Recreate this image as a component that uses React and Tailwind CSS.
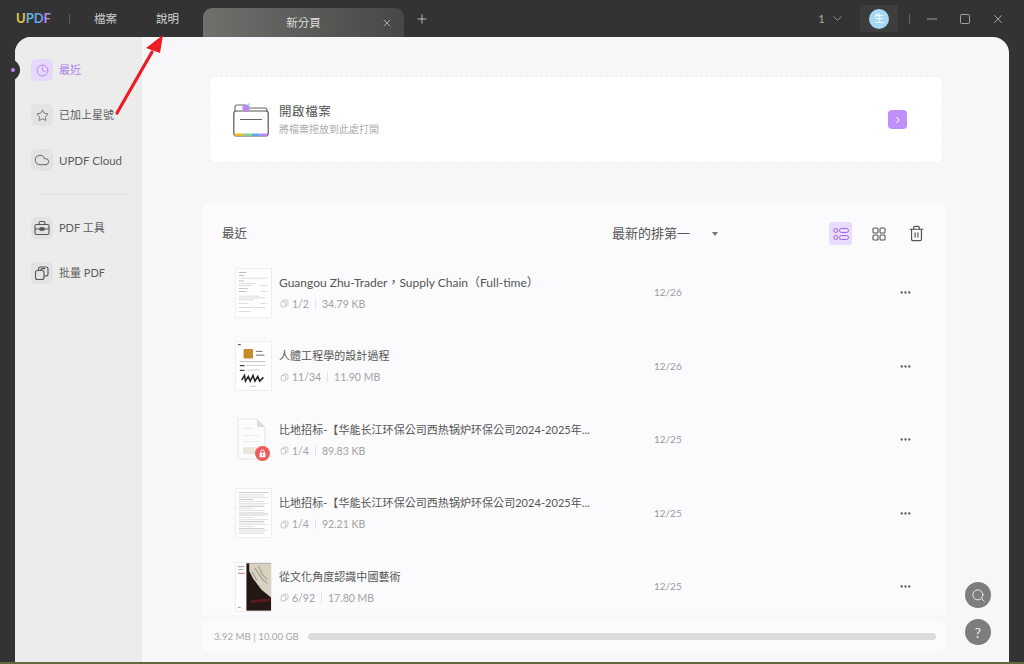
import React from "react";
import { X, Plus, ChevronDown, Minus, Square, Clock, Star, Cloud, ChevronRight, Trash2, Ellipsis, Search } from "lucide-react";

function PagesIcon({ className }) {
  return (
    <svg viewBox="0 0 12 12" className={className} fill="none" stroke="currentColor" strokeWidth="1">
      <rect x="1.5" y="3.5" width="6" height="7" rx="1" />
      <path d="M4 3.5V2.5a1 1 0 0 1 1-1h4.5a1 1 0 0 1 1 1v5a1 1 0 0 1-1 1h-2" />
    </svg>
  );
}

function TextLines({ rows }) {
  return (
    <>
      {rows.map((r, i) => (
        <rect key={i} x={r[0]} y={r[1]} width={r[2]} height="0.5" fill={r[3] || "#b5b5b5"} />
      ))}
    </>
  );
}

const resume = [
  [3, 3, 8, "#777"], [3, 6, 6, "#888"], [3, 9, 30], [3, 12, 5, "#777"], [3, 15, 18], [3, 17, 14], [26, 17, 7], [3, 20, 10, "#888"], [3, 23, 8, "#777"],
  [26, 23, 7], [3, 28, 22], [3, 30, 28], [3, 32, 16], [3, 36, 10], [26, 36, 7], [3, 40, 28], [3, 44, 12],
];
const dense = Array.from({ length: 24 }, (_, i) => [3, 3 + i * 1.9, i % 5 === 4 ? 16 : i % 3 === 0 ? 31 : 27, i % 4 === 0 ? "#999" : "#c4c4c4"]);

function Thumb({ kind }) {
  if (kind === "lock") {
    return (
      <div className="relative w-[33px] h-[43px] flex justify-start">
        <svg viewBox="0 0 29 42" className="w-[29px] h-[42px]">
          <path d="M1 1h19l8 8v32H1z" fill="#fcfcfd" stroke="#e6e6e8" />
          <path d="M20 1v8h8z" fill="#dcdcdf" />
          <rect x="6" y="10" width="10" height="1" fill="#ececee" />
          <rect x="6" y="17" width="17" height="1" fill="#ececee" />
          <rect x="6" y="23" width="17" height="1" fill="#ececee" />
          <rect x="6" y="29" width="14" height="7" rx="1" fill="#ebe7dc" />
        </svg>
        <div className="absolute right-0 bottom-0 w-[15px] h-[15px] rounded-full bg-[#f25a5a] flex items-center justify-center">
          <svg viewBox="0 0 10 10" className="w-[9px] h-[9px]">
            <path d="M3 4.5V3a2 2 0 0 1 4 0v1.5" fill="none" stroke="#fff" strokeWidth="1.1" />
            <rect x="1.8" y="4.3" width="6.4" height="5" rx="0.8" fill="#fff" />
            <rect x="4.5" y="5.7" width="1" height="2" fill="#f25a5a" />
          </svg>
        </div>
      </div>
    );
  }
  if (kind === "art") {
    return (
      <svg viewBox="0 0 37 50" className="w-[37px] h-[50px] border border-[#eeeeee] bg-white">
        <rect x="11" y="0" width="26" height="50" fill="#241815" />
        <path d="M14 0h23v36L27 28 18 16 14 8z" fill="#d9d2c0" />
        <path d="M20 5l8 12 5 4M24 3l4 9 5 5M17 9l5 9" stroke="#a89f8c" strokeWidth="1.3" fill="none" />
        <path d="M16 39l20-2v3l-20 2z" fill="#5b1c1c" />
        <rect x="2" y="3" width="7" height="1" fill="#999" />
        <rect x="2" y="6" width="6" height="1" fill="#bbb" />
        <rect x="2" y="10" width="7" height="1" fill="#d66" />
        <rect x="2" y="46" width="3" height="1" fill="#999" />
      </svg>
    );
  }
  if (kind === "poster") {
    return (
      <svg viewBox="0 0 37 50" className="w-[37px] h-[50px] border border-[#eeeeee] bg-white">
        <rect x="2" y="2" width="3" height="1" fill="#333" />
        <rect x="8" y="7" width="10" height="10" rx="1" fill="#c58a2e" />
        <rect x="21" y="9" width="7" height="1" fill="#666" />
        <rect x="21" y="13" width="9" height="1" fill="#666" />
        <rect x="4" y="20" width="27" height="0.6" fill="#999" />
        <rect x="4" y="24" width="5" height="1.2" fill="#333" />
        <rect x="11" y="24" width="20" height="0.6" fill="#aaa" />
        <rect x="4" y="29" width="5" height="1.2" fill="#333" />
        <rect x="11" y="29" width="14" height="0.6" fill="#aaa" />
        <path d="M6 40l3-5 1 6 3-5 2 5 3-6 2 6 3-5 2 5 4-4" stroke="#222" strokeWidth="1.6" fill="none" />
        <rect x="15" y="46" width="6" height="0.6" fill="#999" />
      </svg>
    );
  }
  return (
    <svg viewBox="0 0 37 50" className="w-[37px] h-[50px] border border-[#eeeeee] bg-white">
      <TextLines rows={kind === "dense" ? dense : resume} />
    </svg>
  );
}

const files = [
  { kind: "resume", latin: true, title: "Guangou Zhu-Trader，Supply Chain（Full-time）", pages: "1/2", size: "34.79 KB", date: "12/26" },
  { kind: "poster", title: "人體工程學的設計過程", pages: "11/34", size: "11.90 MB", date: "12/26" },
  { kind: "lock", title: "比地招标-【华能长江环保公司西热锅炉环保公司2024-2025年...", pages: "1/4", size: "89.83 KB", date: "12/25" },
  { kind: "dense", title: "比地招标-【华能长江环保公司西热锅炉环保公司2024-2025年...", pages: "1/4", size: "92.21 KB", date: "12/25" },
  { kind: "art", title: "從文化角度認識中國藝術", pages: "6/92", size: "17.80 MB", date: "12/25" },
];

function BatchIcon() {
  return (
    <svg viewBox="0 0 16 16" className="w-[16px] h-[16px]" fill="none" stroke="#555" strokeWidth="1.1">
      <rect x="1.5" y="5.5" width="8.5" height="9" rx="2" />
      <path d="M4.5 5.5V4a2 2 0 0 1 2-2H12a2 2 0 0 1 2 2v5a2 2 0 0 1-2 2h-2" />
      <path d="M7 5.5V4.6a1 1 0 0 1 1-1h3" />
    </svg>
  );
}

function ToolboxIcon() {
  return (
    <svg viewBox="0 0 16 16" className="w-[16px] h-[16px]" fill="none" stroke="#555" strokeWidth="1.1">
      <rect x="1" y="4.5" width="14" height="10" rx="1.5" />
      <path d="M5 4.5V3a1.5 1.5 0 0 1 1.5-1.5h3A1.5 1.5 0 0 1 11 3v1.5" />
      <path d="M1 9h5M10 9h5" />
      <rect x="6" y="7.8" width="4" height="2.4" rx="0.5" fill="#555" />
    </svg>
  );
}

function NavItem({ icon, label, active, latin }) {
  return (
    <div className="h-[22px] flex items-center gap-[6px]">
      <div className={`w-[22px] h-[22px] rounded-[5px] flex items-center justify-center ${active ? "bg-[#e6d8fb] text-[#a874ee]" : "bg-[#e3e3e3] text-[#555555]"}`}>
        {icon}
      </div>
      <span className={`pt-[1px] whitespace-nowrap ${latin ? "text-[11.5px]" : "text-[11px]"} ${active ? "text-[#ad7ff0]" : "text-[#5c5c5c]"}`}>{label}</span>
    </div>
  );
}

function FileRow({ f }) {
  return (
    <div className="h-[73.5px] shrink-0 flex items-center pl-8">
      <div className="w-[37px] flex justify-center shrink-0">
        <Thumb kind={f.kind} />
      </div>
      <div className="w-[382px] pl-[7px] shrink-0">
        <div className={`leading-[16px] text-[#555555] whitespace-nowrap ${f.latin ? "text-[12px]" : "text-[11px] tracking-[0.05px]"}`}>{f.title}</div>
        <div className="mt-[6px] flex items-center text-[10.5px] leading-[14px] text-[#a3a3a5]">
          <PagesIcon className="ml-[1px] w-[9px] h-[9px] mr-[3px] text-[#b5b5b7]" />
          <span>{f.pages}</span>
          <span className="w-px h-[10px] bg-[#e4e4e6] mx-[6px]" />
          <span>{f.size}</span>
        </div>
      </div>
      <div className="w-[245px] shrink-0 text-[10px] text-[#9a9a9c]">{f.date}</div>
      <Ellipsis className="w-[13px] h-[13px] text-[#555555]" strokeWidth={2.2} />
    </div>
  );
}

export default function App() {
  return (
    <div lang="zh-TW" className="relative w-[1024px] h-[664px] overflow-hidden bg-[#333333] flex flex-col [font-family:'Lato','Noto_Sans_CJK_TC',sans-serif]">
      {/* Title bar */}
      <div className="h-[37px] shrink-0 flex items-center">
        <div className="w-[70px] pl-4 text-[13px] font-bold flex items-center h-[37px]">
          <span className="text-[#e6c33f]">U</span>
          <span className="text-[#62b6d6]">P</span>
          <span className="text-[#6e9fe6]">D</span>
          <span className="text-[#b58af0]">F</span>
        </div>
        <div className="w-px h-[10px] bg-[#5c5c5c] -ml-[1px]" />
        <span className="ml-[24px] w-[62px] text-[11.5px] text-[#c9c9c9]">檔案</span>
        <span className="w-[47px] text-[11.5px] text-[#d6d6d6]">說明</span>
        <div className="self-end h-[29px] w-[201px] rounded-t-[9px] bg-gradient-to-r from-[#70706d] to-[#474745] flex items-center relative">
          <span className="w-full text-center text-[11.5px] text-[#dddddd]">新分頁</span>
          <X className="absolute left-[178px] top-[9px] w-[12px] h-[12px] text-[#c8c8c8]" strokeWidth={1.5} />
        </div>
        <Plus className="ml-[11px] w-[14px] h-[14px] text-[#d8d8d8]" strokeWidth={1.4} />
        <div className="ml-auto flex items-center h-[37px]">
          <span className="text-[12px] text-[#a8a8a8]">1</span>
          <ChevronDown className="ml-[5px] w-[15px] h-[15px] text-[#a8a8a8]" strokeWidth={1.3} />
          <div className="ml-[15px] w-[38px] h-[27px] bg-[#3d3d3d] flex items-center justify-center">
            <div className="w-[20px] h-[20px] rounded-full bg-[#a5d8f3] flex items-center justify-center text-[10px] text-white">生</div>
          </div>
          <div className="ml-[11px] w-px h-[10px] bg-[#666666]" />
          <Minus className="ml-[14px] w-[16px] h-[16px] text-[#bdbdbd]" strokeWidth={1.2} />
          <Square className="ml-[19px] w-[12px] h-[12px] text-[#bdbdbd]" strokeWidth={1.6} />
          <X className="ml-[20px] mr-[19px] w-[14px] h-[14px] text-[#bdbdbd]" strokeWidth={1.4} />
        </div>
      </div>

      {/* Main window */}
      <div className="mx-[15px] h-[625px] shrink-0 rounded-t-[16px] overflow-hidden flex bg-[#f7f6f8]">
        <aside className="w-[127px] shrink-0 bg-[#ececec] pl-4 pt-[22px] flex flex-col">
          <div className="flex flex-col gap-[23px]">
            <NavItem active label="最近" icon={<Clock className="w-[13px] h-[13px]" strokeWidth={1.4} />} />
            <NavItem label="已加上星號" icon={<Star className="w-[13px] h-[13px]" strokeWidth={1.4} />} />
            <NavItem latin label="UPDF Cloud" icon={<Cloud className="w-[16px] h-[16px]" strokeWidth={1.3} />} />
          </div>
          <div className="ml-[5px] mt-[23px] w-[95px] h-px bg-[#e3e3e3]" />
          <div className="mt-[22px] flex flex-col gap-[23px]">
            <NavItem label="PDF 工具" icon={<ToolboxIcon />} />
            <NavItem label="批量 PDF" icon={<BatchIcon />} />
          </div>
        </aside>

        <main className="flex-1 min-w-0 flex flex-col">
          {/* Open file card */}
          <div className="ml-[67px] mt-[39px] w-[734px] h-[87px] shrink-0 rounded-[6px] bg-white border border-dashed border-[#ededef] flex items-center pl-[23px] pr-[35px]">
            <svg viewBox="0 0 36 34" className="w-[36px] h-[34px] shrink-0">
              <path d="M2 12V4a2 2 0 0 1 2-2h8l2 3h18a2 2 0 0 1 2 2v5" fill="none" stroke="#666" strokeWidth="1.1" />
              <rect x="0.8" y="8" width="34.4" height="25" rx="2.5" fill="#fff" stroke="#555" strokeWidth="1.2" />
              <rect x="7" y="16" width="22" height="1" fill="#666" />
              <circle cx="13" cy="5" r="3.6" fill="#b588f2" />
              <circle cx="16" cy="1.5" r="1.3" fill="#a5e6e6" />
              <rect x="1.5" y="30.5" width="9" height="2.5" fill="#e9bc2f" />
              <rect x="10.5" y="30.5" width="8" height="2.5" fill="#7fd38a" />
              <rect x="18.5" y="30.5" width="8" height="2.5" fill="#62a8e8" />
              <rect x="26.5" y="30.5" width="8" height="2.5" fill="#b588f2" />
            </svg>
            <div className="ml-[10px]">
              <div className="text-[12.5px] leading-[18px] text-[#555555] tracking-[0.6px]">開啟檔案</div>
              <div className="mt-[1px] text-[10px] leading-[14px] text-[#adadad]">將檔案拖放到此處打開</div>
            </div>
            <div className="ml-auto w-[19px] h-[19px] rounded-[4px] bg-[#c08ffa] flex items-center justify-center">
              <ChevronRight className="w-[10px] h-[10px] text-[#ead9ff]" strokeWidth={3} />
            </div>
          </div>

          {/* Recent panel */}
          <div className="ml-[61px] mt-[39px] w-[744px] h-[413px] shrink-0 rounded-t-[8px] bg-[#fbfafc] flex flex-col overflow-hidden">
            <div className="shrink-0 pt-[20px] pb-[11px] pl-[19px] pr-[22px] flex items-center h-[54px]">
              <span className="w-[390px] mt-[2px] text-[12.5px] text-[#555555]">最近</span>
              <span className="w-[100px] text-[13px] text-[#555555] whitespace-nowrap">最新的排第一</span>
              <span className="w-0 h-0 border-x-[3.5px] border-x-transparent border-t-[4px] border-t-[#777777]" />
              <div className="ml-[111px] w-[23px] h-[23px] rounded-[3px] bg-[#e9dcff] flex items-center justify-center">
                <svg viewBox="0 0 16 16" className="w-[16px] h-[16px]" fill="none" stroke="#9a66ea" strokeWidth="1">
                  <circle cx="2.8" cy="4.5" r="2" />
                  <circle cx="2.8" cy="11.5" r="2" />
                  <rect x="6.5" y="2.5" width="9" height="4" rx="2" />
                  <rect x="6.5" y="9.5" width="9" height="4" rx="2" />
                </svg>
              </div>
              <svg viewBox="0 0 14 14" className="ml-[20px] w-[14px] h-[14px]" fill="none" stroke="#555" strokeWidth="1.1">
                <rect x="1" y="1" width="5" height="5" rx="1" />
                <rect x="8" y="1" width="5" height="5" rx="1" />
                <rect x="1" y="8" width="5" height="5" rx="1" />
                <rect x="8" y="8" width="5" height="5" rx="1" />
              </svg>
              <Trash2 className="ml-[22px] w-[17px] h-[17px] text-[#555555]" strokeWidth={1.7} />
            </div>
            {files.map((f, i) => (
              <FileRow key={i} f={f} />
            ))}
          </div>

          {/* Storage */}
          <div className="ml-[61px] mt-[5px] w-[744px] h-[32px] shrink-0 rounded-[6px] bg-[#fbfafc] flex items-center pl-[11px] pr-[11px]">
            <span className="w-[94px] text-[9.7px] text-[#a8a8a8] whitespace-nowrap">3.92 MB | 10.00 GB</span>
            <div className="flex-1 h-[7px] rounded-full bg-[#dbdadc]" />
          </div>
        </main>
      </div>
      <div className="h-[2px] bg-[#5f6b3c]" />

      {/* Active marker notch */}
      <div className="absolute left-[9px] top-[59px] w-[11px] h-[22px] rounded-r-full bg-[#333333] flex items-center pl-[2px]">
        <div className="w-[4px] h-[4px] rounded-full bg-[#b58af0]" />
      </div>

      {/* Floating buttons */}
      <div className="absolute left-[965px] top-[582px] w-[26px] h-[26px] rounded-full bg-[#7d7d7d] flex items-center justify-center">
        <Search className="w-[15px] h-[15px] text-[#eeeeee]" strokeWidth={1.5} />
      </div>
      <div className="absolute left-[965px] top-[619px] w-[26px] h-[26px] rounded-full bg-[#7d7d7d] flex items-center justify-center text-[14px] text-[#eeeeee]">?</div>

      {/* Annotation arrow */}
      <svg className="absolute left-0 top-0 w-[1024px] h-[664px] pointer-events-none" viewBox="0 0 1024 664">
        <path d="M117 113L152 52" stroke="#ea1c24" strokeWidth="3.2" strokeLinecap="round" />
        <path d="M163 35L146 48L160 53z" fill="#ea1c24" />
      </svg>
    </div>
  );
}
